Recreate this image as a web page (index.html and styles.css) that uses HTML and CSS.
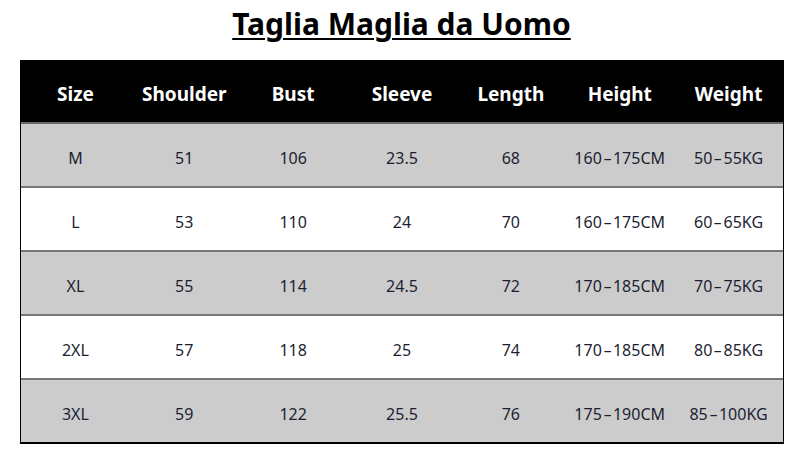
FILE: index.html
```html
<!DOCTYPE html>
<html>
<head>
<meta charset="utf-8">
<link rel="stylesheet" href="styles.css">
</head>
<body>
<h1 class="title">Taglia Maglia da Uomo</h1>
<div class="table">
  <div class="row head">
    <div>Size</div><div>Shoulder</div><div>Bust</div><div>Sleeve</div><div>Length</div><div>Height</div><div>Weight</div>
  </div>
  <div class="row gray">
    <div>M</div><div>51</div><div>106</div><div>23.5</div><div>68</div><div>160<span class="d">-</span>175CM</div><div>50<span class="d">-</span>55KG</div>
  </div>
  <div class="row">
    <div>L</div><div>53</div><div>110</div><div>24</div><div>70</div><div>160<span class="d">-</span>175CM</div><div>60<span class="d">-</span>65KG</div>
  </div>
  <div class="row gray">
    <div>XL</div><div>55</div><div>114</div><div>24.5</div><div>72</div><div>170<span class="d">-</span>185CM</div><div>70<span class="d">-</span>75KG</div>
  </div>
  <div class="row">
    <div>2XL</div><div>57</div><div>118</div><div>25</div><div>74</div><div>170<span class="d">-</span>185CM</div><div>80<span class="d">-</span>85KG</div>
  </div>
  <div class="row gray last">
    <div>3XL</div><div>59</div><div>122</div><div>25.5</div><div>76</div><div>175<span class="d">-</span>190CM</div><div>85<span class="d">-</span>100KG</div>
  </div>
</div>
</body>
</html>
```
FILE: styles.css
```css
html, body {
  margin: 0;
  padding: 0;
  background: #fff;
}
body {
  width: 803px;
  height: 464px;
  font-family: "Noto Sans", "Open Sans", sans-serif;
}
.title {
  margin: 0;
  height: 60px;
  display: flex;
  align-items: center;
  justify-content: center;
  padding-bottom: 14px;
  box-sizing: border-box;
  font-size: 30px;
  font-weight: 700;
  color: #000;
  text-decoration: underline;
  text-decoration-thickness: 2px;
  text-underline-offset: 3px;
}
.table {
  margin-left: 20px;
  width: 764px;
  border-left: 1px solid #000;
  border-right: 1px solid #000;
  border-bottom: 2px solid #000;
  box-sizing: border-box;
}
.row {
  display: grid;
  grid-template-columns: repeat(7, 1fr);
  height: 64px;
  align-items: center;
  text-align: center;
  font-size: 16px;
  color: #1c1f33;
  border-bottom: 2px solid #777;
  box-sizing: border-box;
  padding-top: 5px;
}
.d {
  display: inline-block;
  padding: 0 3px;
  transform: scaleX(1.7);
}
.row.last {
  border-bottom: none;
  height: 62px;
  padding-top: 6px;
}
.row.gray {
  background: #cccccc;
}
.row.head {
  background: #000;
  color: #fff;
  font-weight: 700;
  font-size: 19px;
  border-bottom: 2px solid #666;
  padding-top: 5px;
}
```
